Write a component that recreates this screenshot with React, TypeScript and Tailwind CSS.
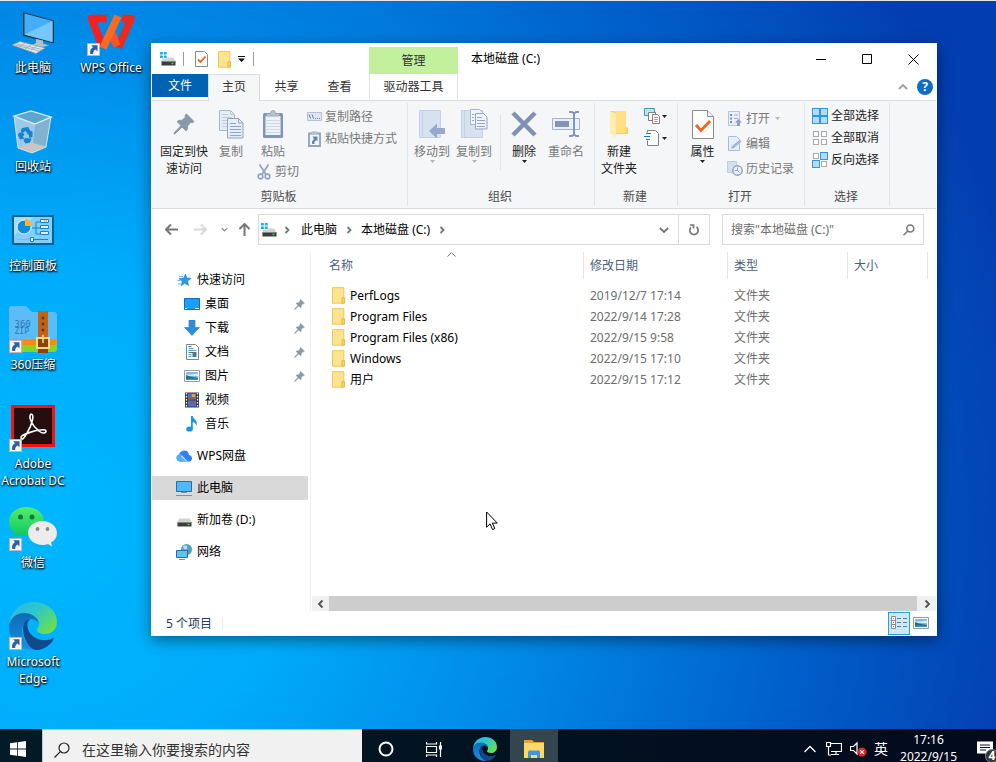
import type { ReactNode } from 'react';

/* ---------- small shared glyphs ---------- */

function ShortcutBadge() {
  return (
    <svg viewBox="0 0 13 13" className="absolute bottom-0 left-0 h-[13px] w-[13px]" aria-hidden="true">
      <rect x=".5" y=".5" width="12" height="12" fill="#f7f7f7" stroke="#b9b9b9" />
      <path d="M4.2 2.2h6.3v6.2L8.600 6.600C7 7.500 6 9 6.200 11H3.300C2.500 8 3.600 5.700 6 4.200z" fill="#2c5fa8" />
    </svg>
  );
}

function Folder({ className }: { className: string }) {
  return (
    <svg viewBox="0 0 14 17" className={className} aria-hidden="true">
      <path d="M1.500.700h11.300v15.500H1.500z" fill="#ffe48f" stroke="#ecc650" />
      <path d="M11 10.700h2.400v5.500H11z" fill="#fbd666" stroke="#e4b93c" />
    </svg>
  );
}

function Drive({ tiles = true }: { tiles?: boolean }) {
  return (
    <svg viewBox="0 0 16 16" className="h-4 w-4 shrink-0" aria-hidden="true">
      <path d="M3 6.500h10.500l2 4h-14z" fill="#d2d2d2" />
      <path d="M1.500 10h14v4.500h-14z" fill="#3c3c3c" />
      <path d="M1.500 10h14v.900h-14z" fill="#8e8e8e" />
      <path d="M11.500 11.700h2v1.500h-2z" fill="#35e23c" />
      {tiles && (
        <>
          <path d="M0 0h7.500v7.500H0z" fill="#fff" />
          <path d="M0 1h2.900v2.500H0zM3.800 1h2.900v2.500H3.800zM0 4.400h2.900v2.500H0zM3.800 4.400h2.900v2.500H3.800z" fill="#12b5ee" />
        </>
      )}
    </svg>
  );
}

function Pin({ className }: { className: string }) {
  return (
    <svg viewBox="0 0 22 22" className={className} aria-hidden="true">
      <path d="M13.500 1l7.500 7.500-1.500 1.200-1.700-.4-3.300 3.800c.4 2.300-.2 3.500-1.400 4.700L9 13.900 2 20.800 1 21l.3-1.200L8 12.500 4 8.600c1.400-1.200 3.200-1.600 4.900-1.200l3.600-3.300-.4-1.800z" fill="#8a99a5" stroke="#8a99a5" strokeWidth="1" strokeLinejoin="round" />
    </svg>
  );
}

function Chevron({ d, className }: { d: string; className: string }) {
  return (
    <svg viewBox="0 0 10 10" className={className} fill="none" stroke="currentColor" strokeWidth="1.800" aria-hidden="true">
      <path d={d} />
    </svg>
  );
}

const chevronRight = 'M3.500 2l3 3-3 3';
const chevronLeft = 'M6.500 1.500L3 5l3.500 3.500';
const chevronDown = 'M1 3l4 4 4-4';
const chevronUp = 'M1 7l4-4 4 4';

function Triangle({ className }: { className: string }) {
  return (
    <svg viewBox="0 0 5 3" className={`h-[3px] w-[5px] shrink-0 ${className}`} aria-hidden="true">
      <path d="M0 0h5L2.500 3z" fill="currentColor" />
    </svg>
  );
}

function Picture() {
  return (
    <svg viewBox="0 0 16 12" className="h-3 w-4 shrink-0" aria-hidden="true">
      <path d="M.5.500h15v11H.5z" fill="#fff" stroke="#9a9a9a" />
      <path d="M2 2h12v8H2z" fill="#7cb8ee" />
      <path d="M2 4.500h5l7-1V6H2z" fill="#d6ecfa" />
      <path d="M2 5l4 1.500L14 8v2H2z" fill="#2d6a6b" />
      <path d="M2 8.500h12V10H2z" fill="#3f8bc4" />
    </svg>
  );
}

function EdgeLogo({ className, id }: { className: string; id: string }) {
  return (
    <svg viewBox="0 0 48 48" className={className} aria-hidden="true">
      <defs>
        <linearGradient id={`${id}a`} x1="0" y1="0" x2="1" y2=".7">
          <stop offset="0" stopColor="#2fb4ee" />
          <stop offset=".5" stopColor="#2bc7cc" />
          <stop offset="1" stopColor="#6be04a" />
        </linearGradient>
        <linearGradient id={`${id}b`} x1="0" y1="0" x2="0" y2="1">
          <stop offset="0" stopColor="#0d6bb5" />
          <stop offset="1" stopColor="#1a90e6" />
        </linearGradient>
      </defs>
      <path d="M0 23C1 10 11 0 25 0c13 0 23 9 23 20 0 8-6 12-12 12-5 0-8-2-8-4 0-1 2-3 2-6 0-5-5-10-13-10C8 12 2 17 0 23z" fill={`url(#${id}a)`} />
      <path d="M0 25c0-7 6-14 15-14 8 0 15 5 15 12 0-3-4-6-8-6-6 0-9 6-9 12 0 9 7 17 15 19C12 49 0 39 0 25z" fill={`url(#${id}b)`} />
      <path d="M14 26c0-5 3-9 7-9-3 3-3 6-2 10 2 7 10 12 19 11 3 0 5-2 6-2 2 0 0 3-3 6-4 4-9 6-14 6-8-2-13-12-13-22z" fill="#11498f" />
    </svg>
  );
}

/* ---------- desktop ---------- */

function DesktopIcon({ label, shortcut, children }: { label: ReactNode; shortcut?: boolean; children: ReactNode }) {
  return (
    <button type="button" className="flex h-[99px] w-full flex-col items-center gap-[3px]">
      <span className="relative block h-12 w-12 shrink-0">
        {children}
        {shortcut && <ShortcutBadge />}
      </span>
      <span className="text-center text-xs leading-[17px] whitespace-nowrap text-white [text-shadow:1px_1px_2px_#000,0_1px_2px_#000]">{label}</span>
    </button>
  );
}

function Desktop() {
  return (
    <div className="flex pt-[7px]">
      <div className="w-[66px]">
        <DesktopIcon label="此电脑">
          <svg viewBox="0 0 48 48" className="h-12 w-12">
            <path d="M14 4l31 8.500v23L14 28z" fill="#2b3a47" />
            <path d="M15.500 5.500L43.500 13v21L15.500 26.500z" fill="#45aef8" />
            <path d="M15.500 26.500L43.500 13v21z" fill="#75c8ff" />
            <path d="M27 31l7 1.500v3l6 2-7 1.500-10-2 4-2z" fill="#b5bfc8" />
            <path d="M3 37l8-3.500 25 6.500-9 5.500z" fill="#e4e8ec" stroke="#8f9aa3" strokeWidth=".7" />
            <path d="M6 37l24 6M8 36l25 5.500M10 39l6-4M16 41l6-4M22 42l6-4" stroke="#9aa5ad" strokeWidth=".8" />
          </svg>
        </DesktopIcon>
        <DesktopIcon label="回收站">
          <svg viewBox="0 0 48 48" className="h-12 w-12">
            <path d="M5 9l17-5 20 6-5 30-14 6-14-5z" fill="#9ccae6" />
            <path d="M26 17l16-7-5 30-14 6z" fill="#7fb3d0" />
            <path d="M5 9l17-5 20 6-16 7z" fill="#5aa8d0" stroke="#e0eef5" strokeWidth="1.300" />
            <path d="M9 41l13-5.500L37 39.500 23 46z" fill="#c9c6c8" />
            <path d="M5 9l4 32 14 5M42 10l-5 30-14 6" stroke="#cfe0ea" strokeWidth="1" fill="none" />
            <path d="M13 21l6-1 2.500 4-3.500 2-1.500-2-2 1.500-3-1zM20 23l3.500 1.500L23.500 30l-3.500 1v-3l-2-1zM9.500 26l4-1 2 3-1.500 1 1 3-4 .5-2-4zM16 31l6.500.5-1.500 4-4.500 1-2-3z" fill="#1683d3" />
          </svg>
        </DesktopIcon>
        <DesktopIcon label="控制面板">
          <svg viewBox="0 0 48 48" className="h-12 w-12">
            <path d="M3 9h42v30H3z" fill="#0d5f97" />
            <path d="M5 11h38v26H5z" fill="#7fd0fb" />
            <path d="M5 11h20L5 30z" fill="#a2defd" />
            <circle cx="15" cy="21" r="7" fill="#168bd7" stroke="#e8f6fd" strokeWidth="1" />
            <path d="M16 20v-7a7 7 0 0 1 7 7z" fill="#ffb325" />
            <path d="M23 22h4v-6h4M27 22h4M27 22v6h4" stroke="#1683c6" fill="none" />
            <path d="M31.500 13.500h8v3h-8zM31.500 19.500h8v3h-8zM31.500 25.500h8v3h-8z" fill="#d9f1fd" stroke="#1683c6" />
            <path d="M35 14.500h3v1h-3z" fill="#f6a11d" />
            <path d="M9 33.500h12" stroke="#f1a32b" />
            <path d="M24 33.500h15" stroke="#1683c6" />
            <path d="M21.500 31.500h3v4h-3z" fill="#fff" stroke="#1683c6" />
          </svg>
        </DesktopIcon>
        <DesktopIcon label="360压缩" shortcut>
          <svg viewBox="0 0 48 48" className="h-12 w-12">
            <path d="M0 36h48v8q0 3-3 3H3q-3 0-3-3z" fill="#86d32a" />
            <path d="M0 32h48v5q0 3-3 3H0z" fill="#ff8a0c" />
            <path d="M0 4q0-3 3-3h13q2 0 3 2l2 2q1 2 3 2h21q3 0 3 3v21q0 3-3 3H0z" fill="#5cbcf6" />
            <path d="M29 6h10v42H29z" fill="#8f420b" />
            <path d="M29 6h10v27H29z" fill="#c06414" />
            <path d="M28 33h12v10H28z" fill="#8f400c" stroke="#ffd98a" strokeWidth="2" />
            <path d="M34 30v8" stroke="#ffd98a" strokeWidth="1.500" />
            <circle cx="34" cy="13" r="1.500" fill="#6d340c" />
            <circle cx="34" cy="19" r="1.500" fill="#6d340c" />
            <circle cx="34" cy="25" r="1.500" fill="#6d340c" />
            <text x="5.500" y="21.500" fontSize="9" fill="#2877b6" fontFamily="DejaVu Sans Mono, monospace">360</text>
            <text x="5.500" y="29" fontSize="8" fill="#2877b6" fontFamily="DejaVu Sans Mono, monospace">ZIP</text>
          </svg>
        </DesktopIcon>
        <DesktopIcon shortcut label={<>Adobe<br />Acrobat DC</>}>
          <svg viewBox="0 0 48 48" className="h-12 w-12">
            <path d="M2 1h44v42H2z" fill="#f3150b" />
            <path d="M5 4h38v36H5z" fill="#260d0e" />
            <path d="M12 34c-1-4 19-9 24-8 3 2-1 5-6 1-7-5-11-14-8-17 4 0 1 11-4 19-3 6-6 8-6 5z" fill="none" stroke="#fff" strokeWidth="1.600" />
          </svg>
        </DesktopIcon>
        <DesktopIcon label="微信" shortcut>
          <svg viewBox="0 0 48 48" className="h-12 w-12">
            <defs>
              <linearGradient id="wechat" x1="0" y1="0" x2="0" y2="1">
                <stop offset="0" stopColor="#55ec71" />
                <stop offset="1" stopColor="#0bc75d" />
              </linearGradient>
            </defs>
            <path d="M17.500 4C8 4 0 10 0 18.500 0 24 3 28 6 30l-2 4 7-2c16 4 24-5 24-13.500C35 10 27 4 17.500 4z" fill="url(#wechat)" />
            <circle cx="11.500" cy="14" r="2.500" fill="#117b3c" />
            <circle cx="23" cy="14" r="2.500" fill="#117b3c" />
            <path d="M33.500 18C25 18 19 23 19 30s7 12 14.500 12c2 0 4-.3 5.500-1l4 2.500-1-4c4-2 6-5.500 6-9.500 0-7-6.500-12-14.500-12z" fill="#ececec" />
            <circle cx="28.500" cy="26" r="1.900" fill="#888" />
            <circle cx="38.500" cy="26" r="1.900" fill="#888" />
          </svg>
        </DesktopIcon>
        <DesktopIcon shortcut label={<>Microsoft<br />Edge</>}>
          <EdgeLogo className="h-12 w-12" id="edgeDesk" />
        </DesktopIcon>
      </div>
      <div className="w-[90px]">
        <DesktopIcon label="WPS Office" shortcut>
          <svg viewBox="0 0 48 48" className="h-12 w-12" fill="none" strokeLinejoin="round" strokeWidth="7.500">
            <path d="M20 10.500H4.500L15 37" stroke="#f5201f" />
            <path d="M35 10.500h9L31.500 39.500" stroke="#ea2a1e" />
            <path d="M23 21l7 17" stroke="#ff5420" />
            <path d="M31 8L16 40" stroke="#ff6a22" />
          </svg>
        </DesktopIcon>
      </div>
    </div>
  );
}

/* ---------- window: title bar, tabs ---------- */

function CaptionButton({ label, d }: { label: string; d: string }) {
  return (
    <button type="button" aria-label={label} className="flex h-[30px] w-[46px] items-center justify-center">
      <svg viewBox="0 0 11 11" className="h-[11px] w-[11px]" fill="none" stroke="#000" aria-hidden="true">
        <path d={d} />
      </svg>
    </button>
  );
}

function TitleBar() {
  return (
    <header className="flex h-[30px]">
      <div className="flex w-[217px] items-center pl-2">
        <Drive />
        <span className="ml-[7px] h-3.5 w-px bg-[#9a9a9a]" />
        <button type="button" aria-label="属性" className="ml-[11px]">
          <svg viewBox="0 0 13 16" className="h-4 w-[13px]" aria-hidden="true">
            <path d="M.5.500h9l3 3v12H.5z" fill="#fff" stroke="#8b8b8b" />
            <path d="M3 8.500l2.500 2.500L10.500 5.500" fill="none" stroke="#e8622a" strokeWidth="1.800" />
          </svg>
        </button>
        <button type="button" aria-label="新建文件夹" className="ml-[9px]">
          <Folder className="h-[17px] w-3.5" />
        </button>
        <button type="button" aria-label="自定义快速访问工具栏" className="ml-[7px]">
          <svg viewBox="0 0 7 6" className="h-1.5 w-[7px]" aria-hidden="true">
            <path d="M0 0h7v1H0zM0 2.500h7L3.500 6z" fill="#111" />
          </svg>
        </button>
        <span className="ml-2 h-3.5 w-px bg-[#9a9a9a]" />
      </div>
      <div className="mt-[3px] w-[89px] bg-[#c2f09c] text-center text-xs leading-[27px] text-[#333]">管理</div>
      <h1 className="ml-[13px] flex-1 text-xs leading-[30px] text-black">本地磁盘 (C:)</h1>
      <CaptionButton label="最小化" d="M0 5.500h10" />
      <CaptionButton label="最大化" d="M.5.500h9v9h-9z" />
      <CaptionButton label="关闭" d="M.5.500l10 10M10.500.500l-10 10" />
    </header>
  );
}

function Tabs() {
  return (
    <nav className="flex h-[27px] border-b border-[#d9dbdd] text-xs leading-[23px] text-[#333]">
      <button type="button" className="h-[23px] w-14 bg-[#0063b1] text-white">文件</button>
      <button type="button" className="h-[27px] w-[52px] border border-b-0 border-[#d9dbdd] bg-[#f5f6f7] pb-[3px]">主页</button>
      <button type="button" className="h-[25px] w-[53px]">共享</button>
      <button type="button" className="h-[25px] w-[53px]">查看</button>
      <button type="button" className="ml-[3px] h-[25px] w-[89px] border-x border-[#e0e1e2]">驱动器工具</button>
      <span className="flex-1" />
      <button type="button" aria-label="最小化功能区" className="mr-[9px] h-[25px] text-[#a0a0a0]">
        <Chevron d={chevronUp} className="h-2.5 w-2.5" />
      </button>
      <button type="button" aria-label="帮助" className="mt-[5px] mr-[3px] h-4 w-4 rounded-full bg-[#0c6ec9] text-xs leading-4 font-bold text-white">?</button>
    </nav>
  );
}

/* ---------- ribbon ---------- */

function Group({ label, className, children }: { label: string; className: string; children: ReactNode }) {
  return (
    <section aria-label={label} className={`my-0.5 flex flex-col border-r border-[#e1e3e5] ${className}`}>
      <div className="flex h-[85px] items-start">{children}</div>
      <div className="pr-0.5 text-center text-xs leading-[18px] text-[#4c4c4c]">{label}</div>
    </section>
  );
}

function BigButton({ label, icon, width, dim, arrow }: { label: ReactNode; icon: ReactNode; width: string; dim?: boolean; arrow?: boolean }) {
  return (
    <button type="button" className={`flex shrink-0 flex-col items-center pt-[5px] text-xs leading-[17px] whitespace-nowrap ${width} ${dim ? 'text-[#797979]' : 'text-[#222]'}`}>
      <span className="mb-[3px] flex h-8 items-center">{icon}</span>
      <span>{label}</span>
      {arrow && <Triangle className={dim ? 'text-[#b3b3b3]' : 'text-[#222]'} />}
    </button>
  );
}

function SmallButton({ label, icon, height, dim, arrow }: { label: string; icon: ReactNode; height: string; dim?: boolean; arrow?: boolean }) {
  return (
    <button type="button" className={`flex items-center gap-[3px] text-xs whitespace-nowrap ${height} ${dim ? 'text-[#797979]' : 'text-[#222]'}`}>
      <span className="flex w-4 justify-center">{icon}</span>
      <span>{label}</span>
      {arrow && <Triangle className="ml-0.5 text-[#b3b3b3]" />}
    </button>
  );
}

function Pages({ className }: { className: string }) {
  return (
    <svg viewBox="0 0 25 29" className={className} fill="#e6ecf5" stroke="#a6b7d0" aria-hidden="true">
      <path d="M.5.500h11l4 4v16H.5z" />
      <path d="M11.500.500v4h4M3 4.500h6M3 7.500h10M3 10.500h10M3 13.500h10M3 16.500h10" fill="none" stroke="#c0cde0" />
      <path d="M8.500 8.500h11l4.500 4.500v15H8.500z" stroke="#91a5c3" />
      <path d="M19.500 8.500V13H24M11 13.500h6M11 16.500h11M11 19.500h11M11 22.500h11M11 25.500h11" fill="none" stroke="#91a5c3" />
    </svg>
  );
}

function Clipboard() {
  return (
    <svg viewBox="0 0 22 30" className="h-[30px] w-[22px]" aria-hidden="true">
      <rect x="1" y="4" width="20" height="25" rx="1.500" fill="#8195b7" />
      <path d="M3.500 7h15v19h-15z" fill="#eef3fa" />
      <path d="M3.500 11.500h15M3.500 14.500h15M3.500 17.500h15M3.500 20.500h15M3.500 23.500h15" stroke="#cdd8e8" />
      <path d="M4.500 7V4.500h4a2.500 3 0 0 1 5 0h4V7z" fill="#b7c2d2" stroke="#8d9cb3" strokeWidth=".8" />
    </svg>
  );
}

function Tiles({ on }: { on: boolean[] }) {
  const at = [[0, 0], [8, 0], [0, 8], [8, 8]];
  return (
    <svg viewBox="0 0 16 16" className="h-4 w-4" aria-hidden="true">
      {at.map(([x, y], i) =>
        on[i] ? (
          <rect key={i} x={x + 0.5} y={y + 0.5} width="7" height="7" fill="#b4dcf9" stroke="#2f96e6" />
        ) : (
          <rect key={i} x={x + 1.5} y={y + 1.5} width="5" height="5" fill="#fff" stroke="#a9a9a9" />
        ),
      )}
    </svg>
  );
}

function BookTo({ pages }: { pages?: boolean }) {
  return (
    <svg viewBox="0 0 27 30" className="h-[30px] w-[27px]" aria-hidden="true">
      <path d="M.5 1.500h21v27H.5z" fill="#d7e2f1" stroke="#c3d2e6" />
      <path d="M3.500 2v26" stroke="#c3d2e6" />
      {pages ? (
        <>
          <path d="M9.500.500h9l3 3v12h-12z" fill="#f0f4fa" stroke="#a6b7d0" />
          <path d="M14.500 4.500h8l3.500 3.500v12H14.500z" fill="#f0f4fa" stroke="#91a5c3" />
          <path d="M16 8.500h5M16 11.500h8M16 14.500h8M16 17.500h8M11 5.500h2M11 8.500h2M11 11.500h2" stroke="#91a5c3" />
        </>
      ) : (
        <path d="M10 22l8-7.500v4.500h8v6h-8v4.500z" fill="#96a9c9" />
      )}
    </svg>
  );
}

function Ribbon() {
  return (
    <div className="flex h-[108px] border-b border-[#d9dbdd] bg-[#f5f6f7]">
      <Group label="剪贴板" className="w-64">
        <BigButton width="w-16" label={<>固定到快<br />速访问</>} icon={<Pin className="h-[22px] w-[22px]" />} />
        <BigButton width="w-[30px]" dim label="复制" icon={<Pages className="h-[29px] w-[25px]" />} />
        <div className="flex w-[60px] flex-col">
          <BigButton width="w-[54px]" dim label="粘贴" icon={<Clipboard />} />
          <div className="pt-0.5 pl-2.5">
            <SmallButton height="h-5" dim label="剪切" icon={
              <svg viewBox="0 0 14 16" className="h-4 w-3.5" fill="none" stroke="#91a3bf" strokeWidth="1.700" aria-hidden="true">
                <path d="M2.500.500l6.500 10M11.500.500L5 10.500" />
                <circle cx="3.500" cy="12.500" r="2.300" />
                <circle cx="10.500" cy="12.500" r="2.300" />
              </svg>
            } />
          </div>
        </div>
        <div className="flex flex-col pt-0.5">
          <SmallButton height="h-[23px]" dim label="复制路径" icon={
            <svg viewBox="0 0 15 9" className="h-[9px] w-[15px]" aria-hidden="true">
              <path d="M.5.500h14v8H.5z" fill="#dfe7f3" stroke="#b4c2d8" />
              <path d="M2 2.500l1.500 4M5 2.500l1.500 4M8 6.500h1M10 6.500h1M12 6.500h1" stroke="#667ea6" fill="none" />
            </svg>
          } />
          <SmallButton height="h-[22px]" dim label="粘贴快捷方式" icon={
            <svg viewBox="0 0 13 16" className="h-4 w-[13px]" aria-hidden="true">
              <path d="M1 2.500h11V15H1z" fill="#f2f6fb" stroke="#8fa2c0" strokeWidth="1.800" />
              <path d="M3.500.500h6v3h-6z" fill="#b2bfd2" />
              <path d="M4.500 5.500h5v5L8 9 6.500 11v2H4.200c-.5-2 0-3.500 1.800-5z" fill="#6580ad" />
            </svg>
          } />
        </div>
      </Group>

      <Group label="组织" className="w-[187px]">
        <BigButton width="w-12" dim arrow label="移动到" icon={<BookTo />} />
        <BigButton width="w-9" dim arrow label="复制到" icon={<BookTo pages />} />
        <span className="mt-3 ml-2 h-[56px] w-px bg-[#e1e3e5]" />
        <BigButton width="w-[46px]" arrow label="删除" icon={
          <svg viewBox="0 0 26 26" className="h-[26px] w-[26px]" aria-hidden="true">
            <path d="M2 2l22 22M24 2L2 24" stroke="#7f92b6" strokeWidth="4.500" />
          </svg>
        } />
        <BigButton width="w-[38px]" dim label="重命名" icon={
          <svg viewBox="0 0 28 26" className="h-[26px] w-7" aria-hidden="true">
            <path d="M.5 7.500h27v11H.5z" fill="#eaf0f8" stroke="#a3b4ce" />
            <path d="M3 10h14v6H3z" fill="#8195b7" />
            <path d="M17 1h3l2 1.500L24 1h3M17 25h3l2-1.500 2 1.500h3M22 2v22" stroke="#8195b7" strokeWidth="2" fill="none" />
          </svg>
        } />
      </Group>

      <Group label="新建" className="w-[83px]">
        <BigButton width="w-12" label={<>新建<br />文件夹</>} icon={
          <svg viewBox="0 0 20 28" className="h-7 w-5" aria-hidden="true">
            <path d="M1 1h16v16l2 1v6H6l-1 3z" fill="#f9d25e" />
            <path d="M6 1h11v22H6z" fill="#ffdf84" />
            <path d="M1 1l6 3v23l-6-3z" fill="#ffeeb3" />
          </svg>
        } />
        <div className="flex flex-col pt-0.5 pl-px">
          <button type="button" aria-label="新建项目" className="flex h-[22px] items-center gap-0.5">
            <svg viewBox="0 0 16 16" className="h-4 w-4" aria-hidden="true">
              <path d="M.5.500h10v7H.5z" fill="#c3e3f3" stroke="#4a90b4" />
              <path d="M4.500 4.500h7v8h-7z" fill="#fff" stroke="#808080" />
              <path d="M8.500 6.500h5l2 2v7h-7z" fill="#fff" stroke="#808080" />
              <path d="M10 9.500h4M10 11.500h4M10 13.500h4" stroke="#e58a8a" />
            </svg>
            <Triangle className="text-[#222]" />
          </button>
          <button type="button" aria-label="轻松访问" className="flex h-[22px] items-center gap-0.5">
            <svg viewBox="0 0 16 16" className="h-4 w-4" aria-hidden="true">
              <path d="M3.500.500h8l3 3v12h-11z" fill="#fff" stroke="#808080" />
              <path d="M1 2.500h7v8H1z" fill="#f8f9fa" />
              <path d="M2 3.500h5M0 6.500h6M2 9.500h4" stroke="#2176c7" strokeWidth="1.200" />
            </svg>
            <Triangle className="text-[#222]" />
          </button>
        </div>
      </Group>

      <Group label="打开" className="w-[127px]">
        <BigButton width="w-[49px]" arrow label="属性" icon={
          <svg viewBox="0 0 22 29" className="h-[29px] w-[22px]" aria-hidden="true">
            <path d="M.5.500h15l6 6v22H.5z" fill="#fff" stroke="#8b8b8b" />
            <path d="M15.500.500v6h6" fill="#eee" stroke="#8b8b8b" />
            <path d="M4 15l5 5.500L18 11" stroke="#f0641e" strokeWidth="2.800" fill="none" />
          </svg>
        } />
        <div className="flex flex-col pt-[3px]">
          <SmallButton height="h-[25px]" dim arrow label="打开" icon={
            <svg viewBox="0 0 14 15" className="h-[15px] w-3.5" aria-hidden="true">
              <path d="M.5.500h11v14H.5z" fill="#e8eef7" stroke="#b5c4da" />
              <path d="M2 3h2v2H2zM2 6.500h2v2H2zM2 10h2v2H2z" fill="#7d93b8" />
              <path d="M6 4h4M6 7.500h4" stroke="#9db0cc" />
              <path d="M7 11.500L10.500 8l3.500 3.500h-2V15H9v-3.500z" fill="#8ba0c3" />
            </svg>
          } />
          <SmallButton height="h-[25px]" dim label="编辑" icon={
            <svg viewBox="0 0 14 15" className="h-[15px] w-3.5" aria-hidden="true">
              <path d="M.5.500h8l3 3v11H.5z" fill="#e8eef7" stroke="#a9bad4" />
              <path d="M3 13l1-3 8-6.500 1.500 2L6 12z" fill="#a5b7d2" />
            </svg>
          } />
          <SmallButton height="h-[25px]" dim label="历史记录" icon={
            <svg viewBox="0 0 16 15" className="h-[15px] w-4" aria-hidden="true">
              <path d="M.5.500h9v11H.5z" fill="#d3dfef" stroke="#c0cee3" />
              <circle cx="10.500" cy="9.500" r="4.700" fill="#eef2f8" stroke="#8f9fba" strokeWidth="1.400" />
              <path d="M10.500 6.500v3h-3M10.500 9.500l2 2" stroke="#8f9fba" fill="none" />
            </svg>
          } />
        </div>
      </Group>

      <Group label="选择" className="w-[85px]">
        <div className="flex flex-col pt-0.5 pl-[7px]">
          <SmallButton height="h-[22px]" label="全部选择" icon={<Tiles on={[true, true, true, true]} />} />
          <SmallButton height="h-[22px]" label="全部取消" icon={<Tiles on={[false, false, false, false]} />} />
          <SmallButton height="h-[22px]" label="反向选择" icon={<Tiles on={[false, true, true, false]} />} />
        </div>
      </Group>
    </div>
  );
}

/* ---------- address bar ---------- */

function Arrow({ d, label, className }: { d: string; label: string; className: string }) {
  return (
    <button type="button" aria-label={label} className={className}>
      <svg viewBox="0 0 13 13" className="h-[13px] w-[13px]" fill="none" stroke="currentColor" strokeWidth="2" aria-hidden="true">
        <path d={d} />
      </svg>
    </button>
  );
}

function AddressRow() {
  return (
    <div className="mt-[5px] mb-[7px] flex h-[31px] items-stretch pr-3">
      <div className="flex w-[106px] items-center pl-[13px] text-[#777]">
        <Arrow label="后退" className="" d="M13 6.500H1.500M6 1.500l-5 5 5 5" />
        <Arrow label="前进" className="ml-4 text-[#dadada]" d="M0 6.500h11.500M7 1.500l5 5-5 5" />
        <button type="button" aria-label="最近浏览的位置" className="ml-3.5 text-[#888]"><Chevron d={chevronDown} className="h-[7px] w-[7px]" /></button>
        <Arrow label="上移" className="ml-2.5" d="M6.500 13V1.500M1.500 6l5-5 5 5" />
      </div>
      <div className="flex flex-1 items-center border border-[#d9d9d9] pl-0.5 text-xs text-black">
        <Drive />
        <Chevron d={chevronRight} className="mx-[5px] h-2.5 w-2.5 text-[#777]" />
        <button type="button" className="ml-1">此电脑</button>
        <Chevron d={chevronRight} className="mx-[7px] h-2.5 w-2.5 text-[#777]" />
        <button type="button">本地磁盘 (C:)</button>
        <Chevron d={chevronRight} className="ml-[7px] h-2.5 w-2.5 text-[#777]" />
        <span className="flex-1" />
        <button type="button" aria-label="以前的位置" className="mr-[9px] text-[#777]"><Chevron d={chevronDown} className="h-2.5 w-2.5" /></button>
        <button type="button" aria-label="刷新" className="flex h-full w-[31px] items-center justify-center border-l border-[#d9d9d9]">
          <svg viewBox="0 0 12 12" className="h-3 w-3" fill="none" stroke="#777" strokeWidth="1.700" aria-hidden="true">
            <path d="M8.500 3A4.200 4.200 0 1 1 3 3.400M2 1h3.500v3.500" />
          </svg>
        </button>
      </div>
      <label className="ml-3 flex w-[202px] items-center border border-[#d9d9d9] pr-2 pl-2">
        <input aria-label="搜索本地磁盘" placeholder={'搜索"本地磁盘 (C:)"'} className="min-w-0 flex-1 text-xs outline-none placeholder:text-[#6d6d6d]" />
        <svg viewBox="0 0 12 12" className="h-3 w-3" fill="none" stroke="#777" strokeWidth="1.600" aria-hidden="true">
          <circle cx="7.300" cy="4.500" r="3.500" />
          <path d="M4.800 7L.5 11.300" />
        </svg>
      </label>
    </div>
  );
}

/* ---------- navigation pane ---------- */

function NavItem({ icon, label, sub, pinned, selected }: { icon: ReactNode; label: string; sub?: boolean; pinned?: boolean; selected?: boolean }) {
  return (
    <li className={selected ? 'bg-[#d9d9d9]' : ''}>
      <button type="button" className={`flex h-6 w-full items-center gap-[5px] pr-[3px] text-xs text-black ${sub ? 'pl-8' : 'pl-6'}`}>
        <span className="flex h-4 w-4 shrink-0 items-center justify-center">{icon}</span>
        <span className="flex-1 text-left">{label}</span>
        {pinned && <Pin className="h-[11px] w-[11px]" />}
      </button>
    </li>
  );
}

function NavPane() {
  return (
    <aside className="w-[159px] shrink-0 border-r border-[#f0f0f0]">
      <ul className="w-[156px] pt-4">
        <NavItem label="快速访问" icon={
          <svg viewBox="0 0 16 16" className="h-4 w-4" aria-hidden="true">
            <path d="M9.500 2l1.200 4 4.500.2L11.700 9l.8 4.500-3.700-2.300L5 13.700l1.300-4.200L3 6.500l4.600-.4z" fill="#2b9ae4" stroke="#1e7fc5" strokeWidth=".6" />
            <path d="M3 4.500h4M1.500 8.500h3M2 12h3" stroke="#6bb8ea" />
          </svg>
        } />
        <NavItem sub pinned label="桌面" icon={
          <svg viewBox="0 0 16 12" className="h-3 w-4" aria-hidden="true">
            <path d="M.5.500h15v11H.5z" fill="#17a0ff" stroke="#0b6ebd" />
            <path d="M11 10.500h4M1 10.500h2" stroke="#d8efff" />
          </svg>
        } />
        <NavItem sub pinned label="下载" icon={
          <svg viewBox="0 0 16 16" className="h-4 w-4" aria-hidden="true"><path d="M5 0h6v7.500h4.500L8 15.500.5 7.500H5z" fill="#2f8ddb" stroke="#2678c0" strokeWidth=".6" /></svg>
        } />
        <NavItem sub pinned label="文档" icon={
          <svg viewBox="0 0 13 16" className="h-4 w-[13px]" aria-hidden="true">
            <path d="M.5.500h9l3 3v12H.5z" fill="#fff" stroke="#838383" />
            <path d="M2.500 4.500h5M2.500 6.500h8M2.500 10.500h3M2.500 12.500h3" stroke="#4c9fd4" />
            <path d="M6.500 9h4v4h-4z" fill="#397f9b" />
            <path d="M2.500 2.500h3M2.500 8.500h8" stroke="#6c6c6c" />
          </svg>
        } />
        <NavItem sub pinned label="图片" icon={<Picture />} />
        <NavItem sub label="视频" icon={
          <svg viewBox="0 0 14 16" className="h-4 w-3.5" aria-hidden="true">
            <path d="M0 .500h14v15H0z" fill="#3b3b3b" />
            <path d="M3 1.500h8v6H3z" fill="#4d76c9" />
            <path d="M3 8.500h8v6H3z" fill="#3d72d8" />
            <path d="M7 2h3v3H7z" fill="#e2a529" />
            <path d="M3 5.500h5v2H3zM6 9h3v3H6z" fill="#b84a31" />
            <path d="M1.500 1v15M12.500 1v15" stroke="#fff" strokeWidth="1.200" strokeDasharray="1.500 1.500" />
          </svg>
        } />
        <NavItem sub label="音乐" icon={
          <svg viewBox="0 0 14 16" className="h-4 w-3.5" aria-hidden="true">
            <ellipse cx="4.500" cy="13" rx="3.300" ry="2.600" fill="#1496ec" />
            <path d="M6 0h1.800c.3 3.500 5.400 4 3.700 10-.3-2-1.500-3.500-3.700-4V13H6z" fill="#1496ec" />
          </svg>
        } />
        <li aria-hidden="true" className="h-2" />
        <NavItem label="WPS网盘" icon={
          <svg viewBox="0 0 16 12" className="h-3 w-4" aria-hidden="true">
            <path d="M4 11.500a3.600 3.600 0 0 1-1-7C4 2 6 .500 8.500.500 11 .500 13 2.500 13 5c4 .5 4 6.500 0 6.500z" fill="#2d82f5" />
            <path d="M3 4.500c3-1 5 3 8 7H4c-4-.5-5-6-1-7z" fill="#5aa9fb" />
            <path d="M5.500 6l5.500 5.500" stroke="#fff" />
          </svg>
        } />
        <li aria-hidden="true" className="h-2" />
        <NavItem selected label="此电脑" icon={
          <svg viewBox="0 0 16 16" className="h-4 w-4" aria-hidden="true">
            <path d="M.5 1.500h15v10H.5z" fill="#4fb9fc" stroke="#2a6f9e" />
            <path d="M5 12.500h6M0 15.500h16" stroke="#7794aa" />
          </svg>
        } />
        <li aria-hidden="true" className="h-2" />
        <NavItem label="新加卷 (D:)" icon={<Drive tiles={false} />} />
        <li aria-hidden="true" className="h-2" />
        <NavItem label="网络" icon={
          <svg viewBox="0 0 16 16" className="h-4 w-4" aria-hidden="true">
            <circle cx="10.500" cy="5.500" r="5.500" fill="#4d9fc4" />
            <path d="M7 2c3-2 5 0 4 3-2 1-4 0-4-3z" fill="#b9dcea" />
            <path d="M.5 6.500h11v7H.5z" fill="#5cc1fc" stroke="#2a6f9e" />
            <path d="M3 15.500h6" stroke="#7794aa" />
          </svg>
        } />
      </ul>
    </aside>
  );
}

/* ---------- file list ---------- */

const files = [
  ['PerfLogs', '2019/12/7 17:14'],
  ['Program Files', '2022/9/14 17:28'],
  ['Program Files (x86)', '2022/9/15 9:58'],
  ['Windows', '2022/9/15 17:10'],
  ['用户', '2022/9/15 17:12'],
];

function FileList() {
  return (
    <div className="flex min-w-0 flex-1 flex-col">
      <div className="flex-1">
        <table className="w-full table-fixed border-separate border-spacing-0 text-left text-xs">
          <colgroup>
            <col />
            <col className="w-36" />
            <col className="w-[120px]" />
            <col className="w-20" />
            <col className="w-2" />
          </colgroup>
          <thead className="text-[#4c607a]">
            <tr className="h-[27px]">
              <th scope="col" className="relative border-r border-[#e5e5e5] pl-[18px] font-normal">
                名称
                <svg viewBox="0 0 9 5" className="absolute top-0 left-1/2 h-[5px] w-[9px]" fill="none" stroke="#777" aria-hidden="true">
                  <path d="M.5 4.500l4-4 4 4" />
                </svg>
              </th>
              <th scope="col" className="border-r border-[#e5e5e5] pl-1.5 font-normal">修改日期</th>
              <th scope="col" className="border-r border-[#e5e5e5] pl-1.5 font-normal">类型</th>
              <th scope="col" className="border-r border-[#e5e5e5] pl-1.5 font-normal">大小</th>
              <td />
            </tr>
            <tr className="h-1.5"><td colSpan={5} /></tr>
          </thead>
          <tbody className="leading-[21px] text-[#6d6d6d]">
            {files.map(([name, date]) => (
              <tr key={name} className="h-[21px]">
                <td className="pl-5 text-black">
                  <span className="flex items-center gap-[5px]">
                    <Folder className="h-[17px] w-3.5" />
                    {name}
                  </span>
                </td>
                <td className="pl-1.5">{date}</td>
                <td className="pl-1.5">文件夹</td>
                <td />
                <td />
              </tr>
            ))}
          </tbody>
        </table>
      </div>
      <div className="ml-px flex h-[15px] bg-[#f0f0f0] text-[#505050]">
        <button type="button" aria-label="向左滚动" className="flex w-[17px] items-center justify-center"><Chevron d={chevronLeft} className="h-2.5 w-2.5" /></button>
        <div className="flex-1 bg-[#cdcdcd]" />
        <button type="button" aria-label="向右滚动" className="flex w-[19px] items-center justify-center"><Chevron d="M3.500 1.500L7 5 3.500 8.500" className="h-2.5 w-2.5" /></button>
      </div>
    </div>
  );
}

function StatusBar() {
  return (
    <footer className="flex h-6 items-center pl-3.5 text-xs text-[#1e395b]">
      <span className="pt-px">5 个项目</span>
      <span className="ml-2.5 h-3 w-px bg-[#ececec]" />
      <span className="flex-1" />
      <button type="button" aria-label="详细信息" className="flex h-[23px] w-[22px] items-center justify-center border border-[#2a9fdf] bg-[#cbe8f6]">
        <svg viewBox="0 0 16 14" className="h-3.5 w-4" aria-hidden="true">
          <path d="M.5.500h4v4h-4zM.5 4.500h4v4h-4zM.5 8.500h4v4h-4z" fill="#fff" stroke="#8b8b8b" />
          <path d="M2 2h1v1H2z" fill="#e08a2e" />
          <path d="M2 6h1v1H2z" fill="#2a86d8" />
          <path d="M2 10h1v1H2z" fill="#d03030" />
          <path d="M6 2.500h4M12 2.500h4M6 6.500h4M12 6.500h4M6 10.500h4M12 10.500h4" stroke="#6f7f88" />
        </svg>
      </button>
      <button type="button" aria-label="大缩略图" className="mr-[7px] ml-[3px]"><Picture /></button>
    </footer>
  );
}

function ExplorerWindow() {
  return (
    <main className="absolute top-[42px] right-[59px] bottom-[93px] left-[151px] flex flex-col border border-[#f7fbff] bg-white shadow-[0_4px_14px_rgba(0,0,0,0.45)]">
      <TitleBar />
      <Tabs />
      <Ribbon />
      <AddressRow />
      <div className="flex min-h-0 flex-1">
        <NavPane />
        <FileList />
      </div>
      <StatusBar />
    </main>
  );
}

/* ---------- taskbar ---------- */

function Taskbar() {
  return (
    <footer className="h-[33px] shrink-0 overflow-hidden bg-linear-to-r from-[#021b27] to-[#020a1c] text-white">
      <div className="flex h-10 items-center">
        <button type="button" aria-label="开始" className="flex h-full w-[42px] items-center pl-2.5">
          <svg viewBox="0 0 16 16" className="h-4 w-4" fill="#fff" aria-hidden="true">
            <path d="M0 2.300l7-1V7.600H0zM7.800 1.200L16 0v7.600H7.800zM0 8.400h7v6.300l-7-1zM7.800 8.400H16V16l-8.200-1.200z" />
          </svg>
        </button>
        <label className="flex h-full w-80 items-center border-t border-l border-[#c4c4c4] bg-[#f1f1f1] pl-[11px]">
          <svg viewBox="0 0 16 16" className="h-4 w-4" fill="none" stroke="#222" strokeWidth="1.200" aria-hidden="true">
            <circle cx="10" cy="6" r="5" />
            <path d="M6.300 9.700L.5 15.500" />
          </svg>
          <input aria-label="搜索" placeholder="在这里输入你要搜索的内容" className="ml-3 min-w-0 flex-1 text-sm outline-none placeholder:text-[#333]" />
        </label>
        <button type="button" aria-label="Cortana" className="flex h-full w-12 items-center justify-center">
          <svg viewBox="0 0 16 16" className="h-4 w-4" fill="none" stroke="#fff" strokeWidth="2" aria-hidden="true"><circle cx="8" cy="8" r="6.500" /></svg>
        </button>
        <button type="button" aria-label="任务视图" className="flex h-full w-12 items-center justify-center">
          <svg viewBox="0 0 16 16" className="h-4 w-4" fill="none" stroke="#fff" strokeWidth="1.200" aria-hidden="true">
            <path d="M.5 1v2h10V1M.5 5.500h10v6H.5zM.5 16v-2h10v2M14.500 1v15" />
            <path d="M13.500 5h2v3h-2z" fill="#fff" />
          </svg>
        </button>
        <button type="button" aria-label="Microsoft Edge" className="ml-[3px] flex h-full w-12 items-center justify-center">
          <EdgeLogo className="h-6 w-6" id="edgeTask" />
        </button>
        <button type="button" aria-label="文件资源管理器" className="ml-px flex h-full w-12 items-center justify-center bg-[#33454f]">
          <svg viewBox="0 0 22 20" className="h-5 w-[22px]" aria-hidden="true">
            <path d="M1 1h8l2 2h10v7H1z" fill="#e3a42a" />
            <path d="M1 4h20v15H1z" fill="#ffd76a" />
            <path d="M5 19v-6q0-1.500 1.500-1.500h9Q17 11.500 17 13v6h-3v-3H8v3z" fill="#3d97e0" />
          </svg>
        </button>
        <span className="flex-1" />
        <button type="button" aria-label="显示隐藏的图标" className="mr-2.5"><svg viewBox="0 0 12 8" className="h-2 w-3" fill="none" stroke="#fff" strokeWidth="1.300" aria-hidden="true"><path d="M.5 7L6 1.500 11.500 7" /></svg></button>
        <svg viewBox="0 0 16 14" className="mr-2 h-3.5 w-4" fill="none" stroke="#fff" strokeWidth="1.200" aria-label="网络" role="img">
          <path d="M5 1.500h10.500v8H5M10 9.500v3M5 12.500h8M2.500 5v8H5M.5.500h4v4h-4z" />
        </svg>
        <svg viewBox="0 0 17 16" className="mr-[7px] h-4 w-[17px]" fill="none" aria-label="静音" role="img">
          <path d="M.5 5.500h3L7 2v11l-3.500-3.500h-3z" stroke="#fff" strokeWidth="1.200" />
          <circle cx="12" cy="11" r="4.500" fill="#d9272e" />
          <path d="M10.300 9.300l3.400 3.400M13.700 9.300l-3.400 3.400" stroke="#fff" strokeWidth="1.200" />
        </svg>
        <span className="mr-3 text-sm">英</span>
        <time className="mr-5 pb-0.5 text-center text-xs leading-[17px]">17:16<br />2022/9/15</time>
        <button type="button" aria-label="通知" className="relative mr-[3px]">
          <svg viewBox="0 0 16 16" className="h-4 w-4" aria-hidden="true">
            <path d="M0 .500h16v12h-4V16l-4-3.500H0z" fill="#fff" />
            <path d="M3 4h10M3 6.500h10M3 9h6" stroke="#0b1520" />
          </svg>
          <span className="absolute top-2 left-2 h-3.5 w-3.5 rounded-full border border-[#888] bg-[#333] text-center text-xs leading-3 font-bold text-white">4</span>
        </button>
      </div>
    </footer>
  );
}

export default function App() {
  return (
    <div className="relative flex h-screen flex-col overflow-hidden border-t border-[#e6e6e6] bg-[radial-gradient(circle_at_4%_68%,#00b7ff_0,#00abfb_24%,#0087e6_47%,#0060cb_70%,#033eb1_92%)] font-['Noto_Sans','Noto_Sans_CJK_SC',sans-serif]">
      <div className="relative min-h-0 flex-1">
        <Desktop />
        <ExplorerWindow />
        <svg viewBox="0 0 12 20" className="absolute top-[510px] left-[486px] h-5 w-3" aria-hidden="true">
          <path d="M.6 1v15.200l3.500-3.400L6.500 18.600l2.300-1-2.400-5.500h4.900z" fill="#fff" stroke="#000" />
        </svg>
      </div>
      <Taskbar />
    </div>
  );
}
